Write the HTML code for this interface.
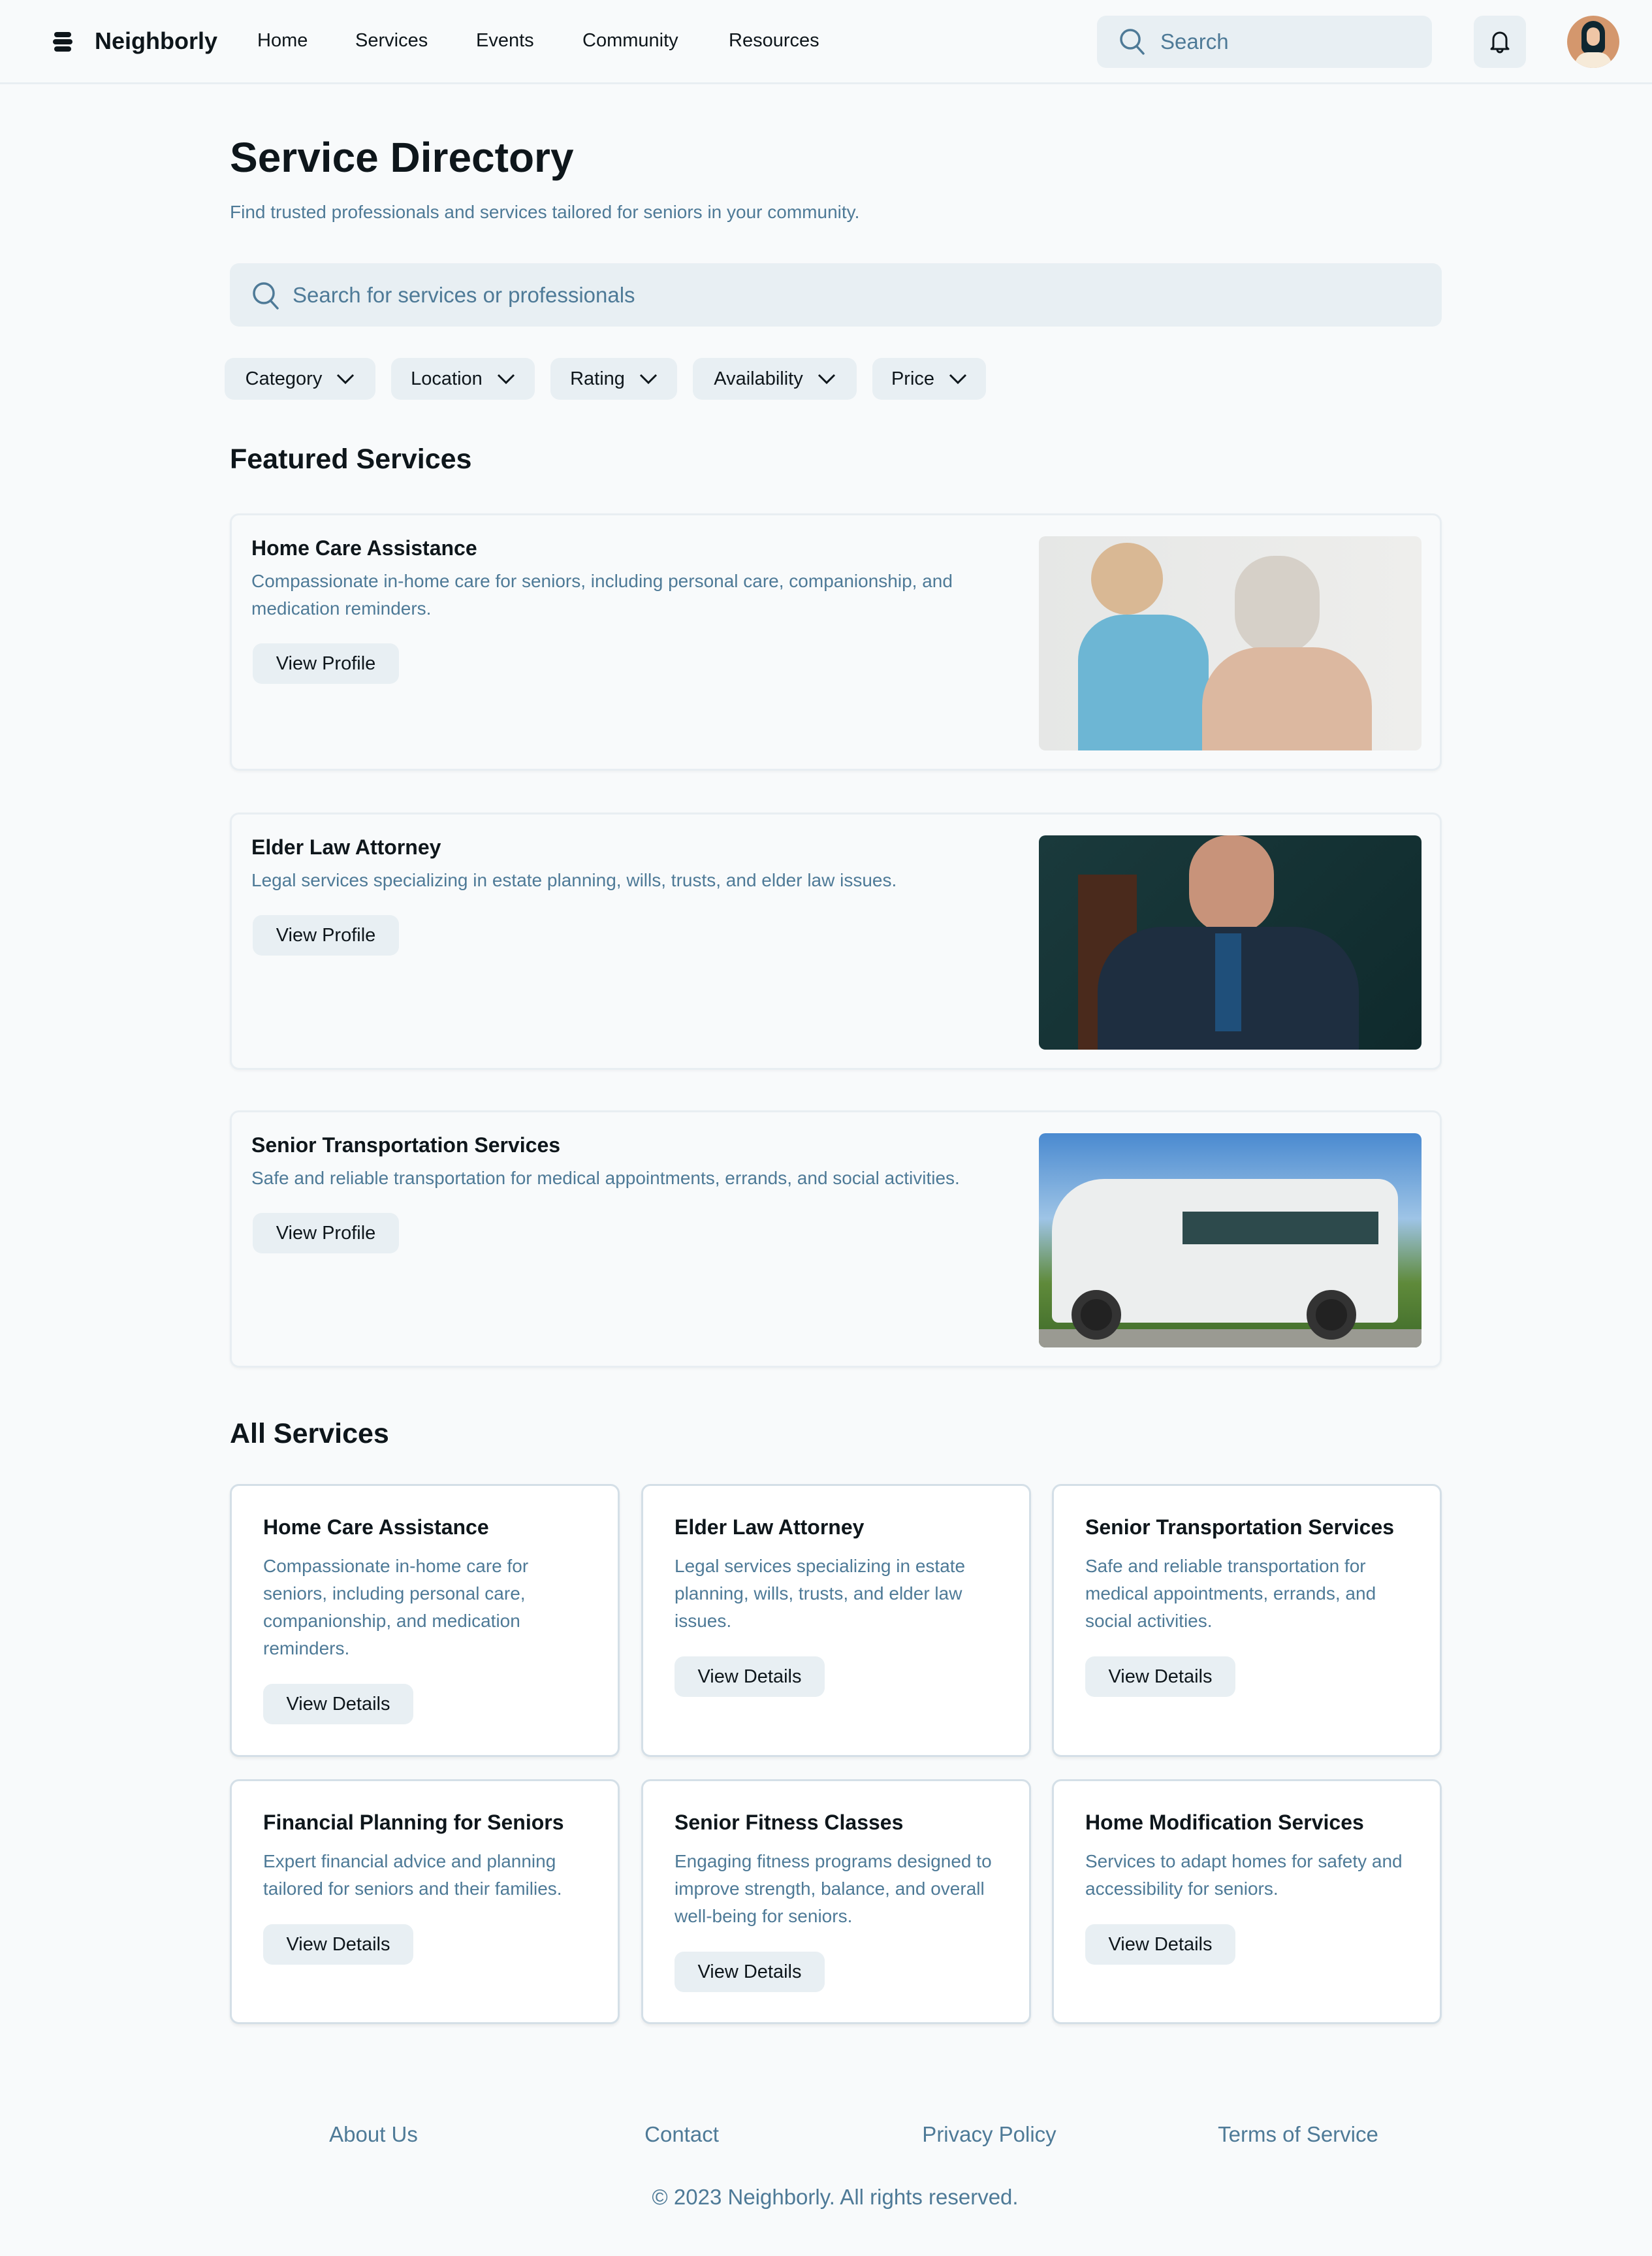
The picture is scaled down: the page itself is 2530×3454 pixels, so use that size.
<!DOCTYPE html>
<html><head><meta charset="utf-8"><style>
*{box-sizing:border-box;margin:0;padding:0}
body{width:2530px;height:3454px;background:#f8fafb;font-family:"Liberation Sans",sans-serif;color:#0e161b;position:relative;overflow:hidden}
.abs{position:absolute}
.hdr{position:absolute;left:0;top:0;width:2530px;height:129px;border-bottom:3px solid #e8eef2}
.nav{position:absolute;top:46px;font-size:29px;color:#0e161b}
.btn{position:absolute;background:#e8eff3;border-radius:14px;font-size:29px;color:#0e161b;display:flex;align-items:center;justify-content:center}
.sub{color:#4e7a97}
.fcard{position:absolute;left:352px;width:1856px;height:394px;background:#f8fafb;border:3px solid #e8eef2;border-radius:14px;box-shadow:0 2px 4px rgba(0,0,0,.04)}
.fcard h3{position:absolute;left:30px;top:32px;font-size:32px;font-weight:bold}
.fcard p{position:absolute;left:30px;top:80px;width:1160px;font-size:28px;line-height:42px;color:#4e7a97}
.fimg{position:absolute;left:1236px;top:32px;width:586px;height:328px;border-radius:10px;overflow:hidden}
.gcard{position:absolute;width:597px;background:#fff;border:3px solid #d4dfe7;border-radius:14px;box-shadow:0 3px 4px rgba(0,0,0,.06)}
.gcard h3{position:absolute;left:48px;top:45px;font-size:32px;font-weight:bold}
.gcard p{position:absolute;left:48px;top:102px;width:490px;font-size:28px;line-height:42px;color:#4e7a97}
.foot{position:absolute;top:3249px;font-size:33px;color:#4e7a97;transform:translateX(-50%)}
</style></head><body>
<div class="hdr"></div>
<svg class="abs" style="left:81px;top:49px" width="30" height="30" viewBox="0 0 30 30"><rect x="2" y="0" width="26" height="8" rx="4" fill="#0e161b"/><rect x="0" y="11" width="30" height="8" rx="4" fill="#0e161b"/><rect x="2" y="22" width="26" height="8" rx="4" fill="#0e161b"/></svg>
<div class="abs" style="left:145px;top:42px;font-size:36px;font-weight:bold">Neighborly</div>
<div class="nav" style="left:394px">Home</div>
<div class="nav" style="left:544px">Services</div>
<div class="nav" style="left:729px">Events</div>
<div class="nav" style="left:892px">Community</div>
<div class="nav" style="left:1116px">Resources</div>
<div class="abs" style="left:1680px;top:24px;width:513px;height:80px;background:#e8eff3;border-radius:14px"></div>
<svg class="abs" style="left:1713px;top:42px" width="42" height="44" viewBox="0 0 42 44"><circle cx="18" cy="18" r="14" fill="none" stroke="#4e7a97" stroke-width="3.5"/><line x1="28" y1="29" x2="38" y2="40" stroke="#4e7a97" stroke-width="3.5" stroke-linecap="round"/></svg>
<div class="abs sub" style="left:1777px;top:45px;font-size:33px">Search</div>
<div class="abs" style="left:2257px;top:24px;width:80px;height:80px;background:#e8eff3;border-radius:14px"></div>
<svg class="abs" style="left:2281px;top:46px" width="32" height="36" viewBox="0 0 32 36"><path d="M6 26 V14 a10 10 0 0 1 20 0 V26 l3 3 H3 Z" fill="none" stroke="#0e161b" stroke-width="3" stroke-linejoin="round"/><path d="M12 30 a4 4 0 0 0 8 0" fill="none" stroke="#0e161b" stroke-width="3"/></svg>
<div class="abs" style="left:2400px;top:24px;width:80px;height:80px;border-radius:50%;background:#d4976d;overflow:hidden"><div style="position:absolute;left:22px;top:8px;width:36px;height:50px;border-radius:18px 18px 10px 10px;background:#0f2630"></div><div style="position:absolute;left:30px;top:18px;width:20px;height:28px;border-radius:10px;background:#f0c6a6"></div><div style="position:absolute;left:12px;top:56px;width:56px;height:40px;border-radius:20px 20px 0 0;background:#f6ead8"></div></div>

<div class="abs" style="left:352px;top:204px;font-size:64px;font-weight:bold">Service Directory</div>
<div class="abs sub" style="left:352px;top:309px;font-size:28px">Find trusted professionals and services tailored for seniors in your community.</div>
<div class="abs" style="left:352px;top:403px;width:1856px;height:97px;background:#e8eff3;border-radius:14px"></div>
<svg class="abs" style="left:385px;top:430px" width="44" height="46" viewBox="0 0 44 46"><circle cx="19" cy="19" r="15" fill="none" stroke="#4e7a97" stroke-width="3.5"/><line x1="30" y1="31" x2="40" y2="42" stroke="#4e7a97" stroke-width="3.5" stroke-linecap="round"/></svg>
<div class="abs sub" style="left:448px;top:433px;font-size:33px">Search for services or professionals</div>

<div class="btn" style="left:344px;top:548px;width:231px;height:64px">Category<span style="margin-left:22px;font-size:0"><svg width="28" height="16" viewBox="0 0 28 16"><path d="M2 2 L14 14 L26 2" fill="none" stroke="#0e161b" stroke-width="3"/></svg></span></div>
<div class="btn" style="left:599px;top:548px;width:220px;height:64px">Location<span style="margin-left:22px;font-size:0"><svg width="28" height="16" viewBox="0 0 28 16"><path d="M2 2 L14 14 L26 2" fill="none" stroke="#0e161b" stroke-width="3"/></svg></span></div>
<div class="btn" style="left:843px;top:548px;width:194px;height:64px">Rating<span style="margin-left:22px;font-size:0"><svg width="28" height="16" viewBox="0 0 28 16"><path d="M2 2 L14 14 L26 2" fill="none" stroke="#0e161b" stroke-width="3"/></svg></span></div>
<div class="btn" style="left:1061px;top:548px;width:251px;height:64px">Availability<span style="margin-left:22px;font-size:0"><svg width="28" height="16" viewBox="0 0 28 16"><path d="M2 2 L14 14 L26 2" fill="none" stroke="#0e161b" stroke-width="3"/></svg></span></div>
<div class="btn" style="left:1336px;top:548px;width:174px;height:64px">Price<span style="margin-left:22px;font-size:0"><svg width="28" height="16" viewBox="0 0 28 16"><path d="M2 2 L14 14 L26 2" fill="none" stroke="#0e161b" stroke-width="3"/></svg></span></div>

<div class="abs" style="left:352px;top:679px;font-size:43px;font-weight:bold">Featured Services</div>

<div class="fcard" style="top:786px"><h3>Home Care Assistance</h3><p>Compassionate in-home care for seniors, including personal care, companionship, and medication reminders.</p>
<div class="btn" style="left:32px;top:196px;width:224px;height:62px">View Profile</div>
<div class="fimg" style="background:linear-gradient(90deg,#e6e7e6,#eeeeec)"><div style="position:absolute;left:80px;top:10px;width:110px;height:110px;border-radius:50%;background:#d9b894"></div><div style="position:absolute;left:60px;top:120px;width:200px;height:210px;border-radius:70px 70px 0 0;background:#6db6d4"></div><div style="position:absolute;left:300px;top:30px;width:130px;height:150px;border-radius:60px;background:#d6d0c8"></div><div style="position:absolute;left:250px;top:170px;width:260px;height:170px;border-radius:90px 90px 0 0;background:#dcb8a0"></div></div></div>

<div class="fcard" style="top:1244px"><h3>Elder Law Attorney</h3><p>Legal services specializing in estate planning, wills, trusts, and elder law issues.</p>
<div class="btn" style="left:32px;top:154px;width:224px;height:62px">View Profile</div>
<div class="fimg" style="background:linear-gradient(135deg,#1a3a3c,#0f2a2c)"><div style="position:absolute;left:60px;top:60px;width:90px;height:270px;background:#4a2a1c"></div><div style="position:absolute;left:230px;top:0;width:130px;height:150px;border-radius:60px;background:#c8937a"></div><div style="position:absolute;left:90px;top:140px;width:400px;height:200px;border-radius:100px 100px 0 0;background:#1e2e40"></div><div style="position:absolute;left:270px;top:150px;width:40px;height:150px;background:#1f4f7a"></div></div></div>

<div class="fcard" style="top:1700px"><h3>Senior Transportation Services</h3><p>Safe and reliable transportation for medical appointments, errands, and social activities.</p>
<div class="btn" style="left:32px;top:154px;width:224px;height:62px">View Profile</div>
<div class="fimg" style="background:linear-gradient(180deg,#4a8ad0 0%,#9ec4e6 40%,#5f8a3a 70%,#3e6a2a 100%)"><div style="position:absolute;left:20px;top:70px;width:530px;height:220px;border-radius:80px 30px 10px 10px;background:#eceeee"></div><div style="position:absolute;left:220px;top:120px;width:300px;height:50px;background:#2d4a4c"></div><div style="position:absolute;left:0;top:300px;width:586px;height:28px;background:#9a9a92"></div><div style="position:absolute;left:50px;top:240px;width:76px;height:76px;border-radius:50%;background:#222;border:14px solid #333"></div><div style="position:absolute;left:410px;top:240px;width:76px;height:76px;border-radius:50%;background:#222;border:14px solid #333"></div></div></div>

<div class="abs" style="left:352px;top:2171px;font-size:43px;font-weight:bold">All Services</div>

<div class="gcard" style="left:352px;top:2272px;height:418px"><h3>Home Care Assistance</h3><p>Compassionate in-home care for seniors, including personal care, companionship, and medication reminders.</p><div class="btn" style="left:48px;top:303px;width:230px;height:62px">View Details</div></div>
<div class="gcard" style="left:982px;top:2272px;height:418px"><h3>Elder Law Attorney</h3><p>Legal services specializing in estate planning, wills, trusts, and elder law issues.</p><div class="btn" style="left:48px;top:261px;width:230px;height:62px">View Details</div></div>
<div class="gcard" style="left:1611px;top:2272px;height:418px"><h3>Senior Transportation Services</h3><p>Safe and reliable transportation for medical appointments, errands, and social activities.</p><div class="btn" style="left:48px;top:261px;width:230px;height:62px">View Details</div></div>
<div class="gcard" style="left:352px;top:2724px;height:375px"><h3>Financial Planning for Seniors</h3><p>Expert financial advice and planning tailored for seniors and their families.</p><div class="btn" style="left:48px;top:219px;width:230px;height:62px">View Details</div></div>
<div class="gcard" style="left:982px;top:2724px;height:375px"><h3>Senior Fitness Classes</h3><p>Engaging fitness programs designed to improve strength, balance, and overall well-being for seniors.</p><div class="btn" style="left:48px;top:261px;width:230px;height:62px">View Details</div></div>
<div class="gcard" style="left:1611px;top:2724px;height:375px"><h3>Home Modification Services</h3><p>Services to adapt homes for safety and accessibility for seniors.</p><div class="btn" style="left:48px;top:219px;width:230px;height:62px">View Details</div></div>

<div class="foot" style="left:572px">About Us</div>
<div class="foot" style="left:1044px">Contact</div>
<div class="foot" style="left:1515px">Privacy Policy</div>
<div class="foot" style="left:1988px">Terms of Service</div>
<div class="foot" style="left:1279px;top:3345px">© 2023 Neighborly. All rights reserved.</div>
</body></html>
